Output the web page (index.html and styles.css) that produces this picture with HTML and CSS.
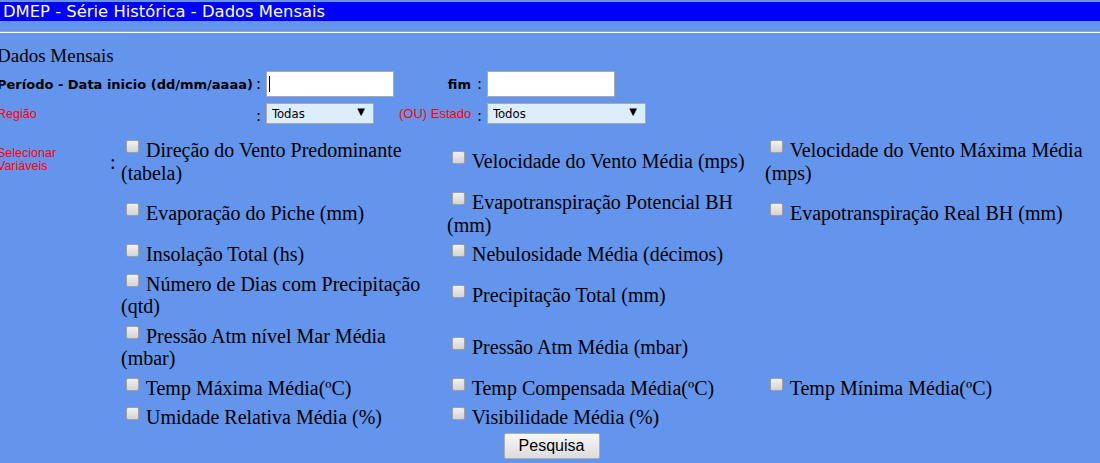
FILE: index.html
```html
<!DOCTYPE html>
<html lang="pt">
<head>
<meta charset="utf-8">
<title>DMEP - Série Histórica - Dados Mensais</title>
<link rel="stylesheet" href="styles.css">
</head>
<body>
<div class="titlebar">DMEP - Série Histórica - Dados Mensais</div>
<hr class="rule">
<div class="page">
  <div class="heading">Dados Mensais</div>
  <div class="filters">
    <div class="lbl bold">Período - Data inicio (dd/mm/aaaa)</div>
    <div class="colon">:</div>
    <div class="field"><span class="caret"><input class="text" type="text"></span></div>
    <div class="lbl2 bold">fim</div>
    <div class="colon">:</div>
    <div class="field"><input class="text" type="text"></div>

    <div class="lbl red">Região</div>
    <div class="colon low">:</div>
    <div class="field"><span class="sel sel-sm"><select><option>Todas</option></select></span></div>
    <div class="lbl2 red">(OU) Estado</div>
    <div class="colon low">:</div>
    <div class="field"><span class="sel sel-lg"><select><option>Todos</option></select></span></div>
  </div>

  <div class="vars">
    <div class="vlabel red">Selecionar<br>Variáveis</div>
    <div class="vcolon">:</div>
    <label class="opt c1"><input type="checkbox" class="cb"> Direção do Vento Predominante (tabela)</label>
    <label class="opt"><input type="checkbox" class="cb"> Velocidade do Vento Média (mps)</label>
    <label class="opt"><input type="checkbox" class="cb"> Velocidade do Vento Máxima Média (mps)</label>

    <label class="opt c1"><input type="checkbox" class="cb"> Evaporação do Piche (mm)</label>
    <label class="opt"><input type="checkbox" class="cb"> Evapotranspiração Potencial BH (mm)</label>
    <label class="opt"><input type="checkbox" class="cb"> Evapotranspiração Real BH (mm)</label>

    <label class="opt c1"><input type="checkbox" class="cb"> Insolação Total (hs)</label>
    <label class="opt"><input type="checkbox" class="cb"> Nebulosidade Média (décimos)</label>
    <div class="opt"></div>

    <label class="opt c1"><input type="checkbox" class="cb"> Número de Dias com Precipitação (qtd)</label>
    <label class="opt"><input type="checkbox" class="cb"> Precipitação Total (mm)</label>
    <div class="opt"></div>

    <label class="opt c1"><input type="checkbox" class="cb"> Pressão Atm nível Mar Média (mbar)</label>
    <label class="opt"><input type="checkbox" class="cb"> Pressão Atm Média (mbar)</label>
    <div class="opt"></div>

    <label class="opt c1"><input type="checkbox" class="cb"> Temp Máxima Média(ºC)</label>
    <label class="opt"><input type="checkbox" class="cb"> Temp Compensada Média(ºC)</label>
    <label class="opt"><input type="checkbox" class="cb"> Temp Mínima Média(ºC)</label>

    <label class="opt c1"><input type="checkbox" class="cb"> Umidade Relativa Média (%)</label>
    <label class="opt"><input type="checkbox" class="cb"> Visibilidade Média (%)</label>
    <div class="opt"></div>

    <div class="actions"><button class="btn" type="button">Pesquisa</button></div>
  </div>
</div>
</body>
</html>
```
FILE: styles.css
```css
html, body {
  margin: 0;
  padding: 0;
}
body {
  background: #6495ed;
  padding-top: 2px;
  overflow: hidden;
  font-family: "Liberation Serif", "Times New Roman", serif;
  color: #000;
}
.titlebar {
  background: #0000ff;
  color: #fff;
  height: 19px;
  line-height: 19px;
  font-family: "DejaVu Sans", Verdana, sans-serif;
  font-size: 16.4px;
  padding-left: 3px;
  white-space: nowrap;
}
.rule {
  margin: 10px 0 0 0;
  height: 0;
  border: 0;
  border-top: 1px solid #9aa6bb;
  border-bottom: 1px solid #ffffff;
  padding: 0;
}
.page {
  margin-left: -3px;
}
.heading {
  font-size: 19px;
  line-height: 22px;
  margin-top: 12px;
  height: 22px;
}
.filters {
  display: grid;
  grid-template-columns: 258px 11px 133px 77px 11px 1fr;
  grid-template-rows: 26px 21px;
  row-gap: 6px;
  align-items: center;
  margin-top: 4px;
}
.bold {
  font-family: "DejaVu Sans", Verdana, sans-serif;
  font-weight: bold;
  font-size: 13px;
  white-space: nowrap;
}
.red {
  color: #ff0000;
  font-family: "Liberation Sans", Arial, sans-serif;
  font-size: 12.5px;
}
.lbl2 {
  text-align: right;
  white-space: nowrap;
  padding-right: 5px;
}
.lbl2.red {
  font-size: 13px;
}
.colon {
  font-family: "DejaVu Sans", Verdana, sans-serif;
  font-size: 15px;
  padding-left: 1px;
}
.colon.low {
  padding-top: 5px;
}
.field {
  display: flex;
  align-items: center;
}
.text {
  box-sizing: border-box;
  width: 128px;
  height: 26px;
  border: 1px solid #a9a9a9;
  background: #fff;
  margin: 0;
  padding: 0 3px;
  outline: none;
}
.caret {
  position: relative;
  display: inline-block;
  height: 26px;
}
.caret::after {
  content: "";
  position: absolute;
  left: 3px;
  top: 5px;
  width: 1px;
  height: 16px;
  background: #000;
}
.sel {
  position: relative;
  display: inline-block;
  height: 21px;
}
.sel select {
  -webkit-appearance: none;
  appearance: none;
  box-sizing: border-box;
  height: 21px;
  margin: 0;
  border: 1px solid #a9a9a9;
  background: #dcedfc;
  color: #000;
  font-family: "DejaVu Sans Condensed", "DejaVu Sans", sans-serif;
  font-size: 13px;
  padding: 0 0 0 5px;
  border-radius: 0;
}
.sel-sm select { width: 108px; }
.sel-lg select { width: 159px; }
.sel::after {
  content: "▼";
  position: absolute;
  right: 9px;
  top: 3px;
  font-size: 10px;
  font-family: "DejaVu Sans", sans-serif;
  color: #000;
  pointer-events: none;
}
.vars {
  display: grid;
  grid-template-columns: 113px 10px 326px 318px 1fr;
  margin-top: 12px;
  font-size: 20px;
  line-height: 22.5px;
}
.vlabel {
  grid-row: 1;
  grid-column: 1;
  align-self: center;
  line-height: 13px;
  padding-bottom: 4px;
}
.vcolon {
  grid-row: 1;
  grid-column: 2;
  align-self: center;
  font-size: 20px;
}
.opt {
  padding: 3px 1px 4px 1px;
  align-self: center;
}
.c1 {
  grid-column: 3;
  padding-right: 9px;
}
.cb {
  -webkit-appearance: none;
  appearance: none;
  width: 13px;
  height: 13px;
  margin: 0 2px 4px 5px;
  box-sizing: border-box;
  border: 1px solid #a0a0a0;
  border-radius: 2px;
  background: linear-gradient(#f0f0f0, #d4d4d4);
  vertical-align: baseline;
}
.actions {
  grid-column: 1 / -1;
  display: flex;
  justify-content: center;
  padding: 0 0 0 6px;
}
.btn {
  width: 96px;
  height: 26px;
  font-family: "Liberation Sans", Arial, sans-serif;
  font-size: 16px;
  color: #000;
  border: 1px solid #adadad;
  border-radius: 2px;
  background: linear-gradient(#f7f7f7, #dcdcdc);
  padding: 0;
}
```
